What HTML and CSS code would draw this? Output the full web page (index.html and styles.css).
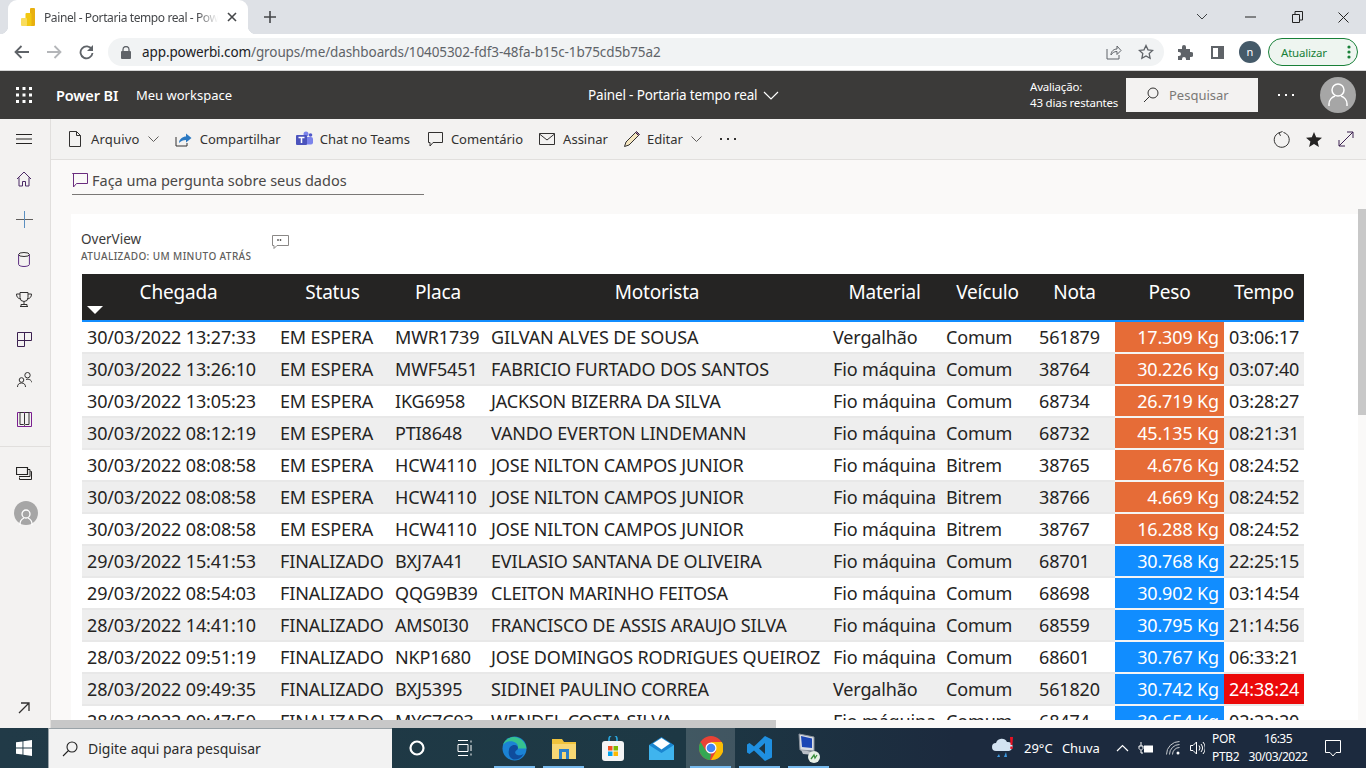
FILE: index.html
```html
<!doctype html>
<html lang="pt-br">
  <head>
    <meta charset="utf-8">
    <title>Painel - Portaria tempo real - Power BI</title>
    <link rel="stylesheet" href="styles.css">
  </head>
  <body>
    <!-- browser chrome -->
    <div class="tabstrip">
      <div class="tab">
        <svg class="favicon" width="14" height="18" viewBox="0 0 14 18"><rect x="9" y="0" width="5" height="18" rx="1" fill="#e8b00f"/><rect x="4.500" y="5" width="6" height="13" rx="1" fill="#f2c811"/><rect x="0" y="10" width="6" height="8" rx="1" fill="#f9dc5c"/></svg>
        <span class="tab-title">Painel - Portaria tempo real - Power BI</span>
        <svg width="10" height="10" viewBox="0 0 10 10"><path d="M1 1l8 8M9 1l-8 8" stroke="#45474a" stroke-width="1.600"/></svg>
      </div>
      <svg class="newtab" width="12" height="12" viewBox="0 0 12 12"><path d="M6 0v12M0 6h12" stroke="#45474a" stroke-width="1.600"/></svg>
      <div class="winctl">
        <svg width="12" height="8" viewBox="0 0 12 8"><path d="M1 1l5 5 5-5" fill="none" stroke="#3c4043"/></svg>
        <svg width="11" height="2" viewBox="0 0 11 2"><path d="M0 1h11" stroke="#222"/></svg>
        <svg width="11" height="12" viewBox="0 0 11 12"><path d="M.5 3.500h7v8h-7zM3 3V.5h7.500V9H8" fill="none" stroke="#222"/></svg>
        <svg width="11" height="11" viewBox="0 0 11 11"><path d="M.5.500l10 10M10.500.5l-10 10" stroke="#222"/></svg>
      </div>
    </div>
    <div class="urlbar">
      <svg class="nav-back" width="16" height="14" viewBox="0 0 16 14"><path d="M15 7H2M7.500 1L1.500 7l6 6" fill="none" stroke="#5f6368" stroke-width="1.800"/></svg>
      <svg class="nav-fwd" width="16" height="14" viewBox="0 0 16 14"><path d="M1 7h13M8.500 1l6 6-6 6" fill="none" stroke="#b4b6b9" stroke-width="1.800"/></svg>
      <svg class="nav-reload" width="15" height="15" viewBox="0 0 15 15"><path d="M12.800 4.500A6 6 0 1 0 13.500 8" fill="none" stroke="#5f6368" stroke-width="1.800"/><path d="M14 0v6H8z" fill="#5f6368"/></svg>
      <div class="address">
        <svg width="10" height="13" viewBox="0 0 10 13"><path d="M2 5V3.500a3 3 0 0 1 6 0V5" fill="none" stroke="#5f6368" stroke-width="1.300"/><rect y="5" width="10" height="8" rx="1" fill="#5f6368"/></svg>
        <span class="url"><b>app.powerbi.com</b>/groups/me/dashboards/10405302-fdf3-48fa-b15c-1b75cd5b75a2</span>
        <svg class="addr-share" width="16" height="16" viewBox="0 0 16 16"><path d="M1 5v10h12v-4" fill="none" stroke="#5f6368"/><path d="M5 11c0-4 3-6 6-6V2l4 4.500-4 4V7.500C8 7.500 6 9 5 11z" fill="none" stroke="#5f6368"/></svg>
        <svg width="16" height="16" viewBox="0 0 16 16"><path d="M8 1.500l2 4.300 4.700.6-3.500 3.200.9 4.700L8 12l-4.100 2.300.9-4.700L1.300 6.400 6 5.800z" fill="none" stroke="#5f6368" stroke-width="1.300"/></svg>
      </div>
      <svg class="ext" width="15" height="15" viewBox="0 0 15 15"><path d="M0 4h4V2a2 2 0 0 1 4 0v2h4v3h1a2 2 0 0 1 0 5h-1v3H8v-1a2 2 0 0 0-4 0v1H0v-4h1a2 2 0 0 0 0-4H0z" fill="#5f6368"/></svg>
      <svg class="sidepanel" width="13" height="13" viewBox="0 0 13 13"><path d="M0 0h13v13H0z" fill="#5f6368"/><path d="M2 2h5v9H2z" fill="#fff"/></svg>
      <span class="profile">n</span>
      <span class="update">Atualizar<svg width="4" height="14" viewBox="0 0 4 14"><circle cx="2" cy="2" r="1.600" fill="#188038"/><circle cx="2" cy="7" r="1.600" fill="#188038"/><circle cx="2" cy="12" r="1.600" fill="#188038"/></svg></span>
    </div>

    <!-- power bi header -->
    <header class="pbi-head">
      <svg class="waffle" width="16" height="16" viewBox="0 0 16 16" fill="#fff"><rect width="3" height="3"/><rect x="6.500" width="3" height="3"/><rect x="13" width="3" height="3"/><rect y="6.500" width="3" height="3"/><rect x="6.500" y="6.500" width="3" height="3"/><rect x="13" y="6.500" width="3" height="3"/><rect y="13" width="3" height="3"/><rect x="6.500" y="13" width="3" height="3"/><rect x="13" y="13" width="3" height="3"/></svg>
      <span class="brand">Power BI</span>
      <span class="workspace">Meu workspace</span>
      <span class="board-title">Painel - Portaria tempo real</span>
      <svg class="board-chev" width="16" height="9" viewBox="0 0 16 9"><path d="M1 1l7 7 7-7" fill="none" stroke="#fff" stroke-width="1.200"/></svg>
      <div class="trial">Avaliação:<br>43 dias restantes</div>
      <div class="search">
        <svg width="16" height="16" viewBox="0 0 16 16"><circle cx="10" cy="6" r="5" fill="none" stroke="#323130"/><path d="M6.500 9.500L1 15" stroke="#323130"/></svg>
        <span>Pesquisar</span>
      </div>
      <svg class="head-more" width="16" height="2" viewBox="0 0 16 2" fill="#fff"><rect width="2" height="2"/><rect x="7" width="2" height="2"/><rect x="14" width="2" height="2"/></svg>
      <span class="head-avatar">
        <svg width="20" height="24" viewBox="0 0 20 24"><circle cx="10" cy="7" r="6" fill="none" stroke="#fff" stroke-width="1.500"/><path d="M1 23v-2c0-4 3-7 6-8M19 23v-2c0-4-3-7-6-8" fill="none" stroke="#fff" stroke-width="1.500"/></svg>
      </span>
    </header>

    <div class="app">
      <nav class="sidebar">
        <span class="rail"><svg width="16" height="10" viewBox="0 0 16 10"><path d="M0 .5h16M0 5h16M0 9.500h16" stroke="#252423"/></svg></span>
        <span class="rail"><svg width="16" height="16" viewBox="0 0 16 16"><path d="M1 8l7-7 7 7M3 6.500V15h3.500v-4.500h3V15H13V6.500" fill="none" stroke="#4b2a66"/></svg></span>
        <span class="rail"><svg width="17" height="17" viewBox="0 0 17 17"><path d="M0 8.500h17" stroke="#605e5c"/><path d="M8.500 0v17" stroke="#5a8fc0"/></svg></span>
        <span class="rail"><svg width="12" height="15" viewBox="0 0 12 15"><ellipse cx="6" cy="2.500" rx="5.400" ry="2" fill="none" stroke="#323130"/><path d="M.6 2.500v10c0 1 2.400 2 5.400 2s5.400-1 5.400-2v-10" fill="none" stroke="#5c2d80"/></svg></span>
        <span class="rail"><svg width="16" height="15" viewBox="0 0 16 15"><path d="M4 .5h8v5a4 4 0 0 1-8 0zM4 2H.5c0 3 1.500 4.500 4 5M12 2h3.500c0 3-1.500 4.500-4 5M8 9.500V12M5 14.500v-2h6v2zM4 14.500h8" fill="none" stroke="#323130"/></svg></span>
        <span class="rail"><svg width="15" height="15" viewBox="0 0 15 15"><path d="M.5.500h14v8H.5zM7.500.5v14M.5 8.500v6h7" fill="none" stroke="#3b2050"/></svg></span>
        <span class="rail"><svg width="15" height="15" viewBox="0 0 15 15"><circle cx="10.500" cy="3.200" r="2.700" fill="none" stroke="#323130"/><circle cx="4.500" cy="8" r="2.300" fill="none" stroke="#323130"/><path d="M.5 15c0-2.500 1.500-4 4-4s4 1.500 4 4M9 7.500c2.500-1 5.500.5 6 3" fill="none" stroke="#323130"/></svg></span>
        <span class="rail"><svg width="15" height="15" viewBox="0 0 15 15"><path d="M.5.500h14v14H.5z" fill="none" stroke="#7a1e8f"/><path d="M3 .5h3.500l1 1 1-1H12v12H8.500l-1 1-1-1H3zM7.500 1.500v11" fill="none" stroke="#323130"/></svg></span>
        <hr class="side-rule">
        <span class="rail"><svg width="16" height="13" viewBox="0 0 16 13"><path d="M.5.500h11v7H.5z" fill="none" stroke="#252423" stroke-width="1.200"/><path d="M12 2.500h2v7H3M14.500 4.500h1v8h-12v-2" fill="none" stroke="#252423"/></svg></span>
        <span class="rail"><span class="side-avatar"><svg width="14" height="16" viewBox="0 0 14 16"><circle cx="7" cy="5" r="4" fill="none" stroke="#fff" stroke-width="1.300"/><path d="M1 16v-1c0-3 2-5 4-6M13 16v-1c0-3-2-5-4-6" fill="none" stroke="#fff" stroke-width="1.300"/></svg></span></span>
        <svg class="side-expand" width="12" height="12" viewBox="0 0 12 12"><path d="M1 11L11 1M3 1h8v8" fill="none" stroke="#323130" stroke-width="1.300"/></svg>
      </nav>

      <div class="workarea">
        <div class="cmdbar">
          <svg class="cmd-icon cmd-first" width="12" height="16" viewBox="0 0 12 16"><path d="M.5.500h7l4 4v11H.5zM7.500.5v4h4" fill="none" stroke="#323130"/></svg>
          <span class="cmd">Arquivo</span>
          <svg class="chev" width="11" height="6" viewBox="0 0 11 6"><path d="M.5.500l5 5 5-5" fill="none" stroke="#605e5c"/></svg>
          <svg class="cmd-icon" width="17" height="15" viewBox="0 0 17 15"><path d="M1 5v9h11v-3" fill="none" stroke="#323130"/><path d="M4 11c0-4 4-6.500 7-6.500V1.500l5.500 4.500L11 10.500V8C8 8 6 9 4 11z" fill="#2b79c2"/></svg>
          <span class="cmd">Compartilhar</span>
          <svg class="cmd-icon cmd-teams" width="17" height="17" viewBox="0 0 17 17"><circle cx="10" cy="3" r="2.500" fill="#7b83eb"/><circle cx="14.500" cy="4" r="1.800" fill="#5059c9"/><rect x="9" y="6" width="8" height="7.500" rx="2" fill="#7b83eb"/><rect x="0" y="4" width="11" height="10" rx="1" fill="#4b53bc"/><path d="M2.500 6.500h6M5.500 6.500v5.500" stroke="#fff" stroke-width="1.500"/></svg>
          <span class="cmd">Chat no Teams</span>
          <svg class="cmd-icon cmd-comment" width="15" height="15" viewBox="0 0 15 15"><path d="M.5.500h14v10H5l-3 3.500v-3.500H.5z" fill="none" stroke="#323130"/></svg>
          <span class="cmd">Comentário</span>
          <svg class="cmd-icon cmd-mail" width="16" height="12" viewBox="0 0 16 12"><path d="M.5.500h15v11H.5zM.5 1l7.500 6 7.500-6" fill="none" stroke="#323130"/></svg>
          <span class="cmd">Assinar</span>
          <svg class="cmd-icon cmd-pencil" width="17" height="17" viewBox="0 0 17 17"><path d="M3 11L12.500 1.500l3 3L6 14l-4.500 1.500z" fill="#f5e6c0" stroke="#323130"/><path d="M12.500 1.500l3 3 1-1-3-3z" fill="#b56fb5" stroke="#323130"/></svg>
          <span class="cmd">Editar</span>
          <svg class="chev" width="11" height="6" viewBox="0 0 11 6"><path d="M.5.500l5 5 5-5" fill="none" stroke="#605e5c"/></svg>
          <svg class="cmd-more" width="16" height="2" viewBox="0 0 16 2" fill="#323130"><rect width="2" height="2"/><rect x="7" width="2" height="2"/><rect x="14" width="2" height="2"/></svg>
          <div class="cmd-right">
            <svg width="17" height="17" viewBox="0 0 17 17"><path d="M6 1.800A7.500 7.500 0 1 0 10.500 1.500" fill="none" stroke="#323130"/><path d="M9.500 .5L6 1.800l1.500 3" fill="none" stroke="#323130"/></svg>
            <svg width="16" height="15" viewBox="0 0 16 15"><path d="M8 0l2.200 5.200 5.800.5-4.400 3.700 1.300 5.600L8 12l-4.900 3 1.300-5.600L0 5.700l5.800-.5z" fill="#252423"/></svg>
            <svg width="16" height="16" viewBox="0 0 16 16"><path d="M1 15L15 1M9 1h6v6M1 9v6h6" fill="none" stroke="#3b2050"/></svg>
          </div>
        </div>

        <div class="canvas-row">
          <div class="canvas">
            <div class="qna">
              <svg width="16" height="16" viewBox="0 0 16 16"><path d="M.5 1.500h15v10H4.500l-3 3.500V1.500z" fill="none" stroke="#6a2c7e"/></svg>
              <span>Faça uma pergunta sobre seus dados</span>
            </div>
            <section class="tile">
              <div class="tile-head">
                <div>
                  <div class="tile-name">OverView</div>
                  <div class="tile-updated">ATUALIZADO: UM MINUTO ATRÁS</div>
                </div>
                <svg width="17" height="15" viewBox="0 0 17 15"><path d="M.5.500h16v10H5l-3 3v-3H.5z" fill="none" stroke="#8a8886"/><path d="M6 4v2M8.500 4v2" stroke="#605e5c" stroke-width="1.400"/></svg>
              </div>
              <table class="grid">
                <colgroup>
                  <col class="c1"><col class="c2"><col class="c3"><col class="c4"><col class="c5"><col class="c6"><col class="c7"><col class="c8"><col class="c9">
                </colgroup>
                <thead>
                  <tr>
                    <th>Chegada<i class="sort"></i></th><th>Status</th><th>Placa</th><th>Motorista</th><th>Material</th><th>Veículo</th><th>Nota</th><th>Peso</th><th>Tempo</th>
                  </tr>
                </thead>
                <tbody>
                  <tr><td>30/03/2022 13:27:33</td><td>EM ESPERA</td><td>MWR1739</td><td>GILVAN ALVES DE SOUSA</td><td>Vergalhão</td><td>Comum</td><td>561879</td><td class="peso orange">17.309 Kg</td><td class="tempo">03:06:17</td></tr>
                  <tr><td>30/03/2022 13:26:10</td><td>EM ESPERA</td><td>MWF5451</td><td>FABRICIO FURTADO DOS SANTOS</td><td>Fio máquina</td><td>Comum</td><td>38764</td><td class="peso orange">30.226 Kg</td><td class="tempo">03:07:40</td></tr>
                  <tr><td>30/03/2022 13:05:23</td><td>EM ESPERA</td><td>IKG6958</td><td>JACKSON BIZERRA DA SILVA</td><td>Fio máquina</td><td>Comum</td><td>68734</td><td class="peso orange">26.719 Kg</td><td class="tempo">03:28:27</td></tr>
                  <tr><td>30/03/2022 08:12:19</td><td>EM ESPERA</td><td>PTI8648</td><td>VANDO EVERTON LINDEMANN</td><td>Fio máquina</td><td>Comum</td><td>68732</td><td class="peso orange">45.135 Kg</td><td class="tempo">08:21:31</td></tr>
                  <tr><td>30/03/2022 08:08:58</td><td>EM ESPERA</td><td>HCW4110</td><td>JOSE NILTON CAMPOS JUNIOR</td><td>Fio máquina</td><td>Bitrem</td><td>38765</td><td class="peso orange">4.676 Kg</td><td class="tempo">08:24:52</td></tr>
                  <tr><td>30/03/2022 08:08:58</td><td>EM ESPERA</td><td>HCW4110</td><td>JOSE NILTON CAMPOS JUNIOR</td><td>Fio máquina</td><td>Bitrem</td><td>38766</td><td class="peso orange">4.669 Kg</td><td class="tempo">08:24:52</td></tr>
                  <tr><td>30/03/2022 08:08:58</td><td>EM ESPERA</td><td>HCW4110</td><td>JOSE NILTON CAMPOS JUNIOR</td><td>Fio máquina</td><td>Bitrem</td><td>38767</td><td class="peso orange">16.288 Kg</td><td class="tempo">08:24:52</td></tr>
                  <tr><td>29/03/2022 15:41:53</td><td>FINALIZADO</td><td>BXJ7A41</td><td>EVILASIO SANTANA DE OLIVEIRA</td><td>Fio máquina</td><td>Comum</td><td>68701</td><td class="peso blue">30.768 Kg</td><td class="tempo">22:25:15</td></tr>
                  <tr><td>29/03/2022 08:54:03</td><td>FINALIZADO</td><td>QQG9B39</td><td>CLEITON MARINHO FEITOSA</td><td>Fio máquina</td><td>Comum</td><td>68698</td><td class="peso blue">30.902 Kg</td><td class="tempo">03:14:54</td></tr>
                  <tr><td>28/03/2022 14:41:10</td><td>FINALIZADO</td><td>AMS0I30</td><td>FRANCISCO DE ASSIS ARAUJO SILVA</td><td>Fio máquina</td><td>Comum</td><td>68559</td><td class="peso blue">30.795 Kg</td><td class="tempo">21:14:56</td></tr>
                  <tr><td>28/03/2022 09:51:19</td><td>FINALIZADO</td><td>NKP1680</td><td>JOSE DOMINGOS RODRIGUES QUEIROZ</td><td>Fio máquina</td><td>Comum</td><td>68601</td><td class="peso blue">30.767 Kg</td><td class="tempo">06:33:21</td></tr>
                  <tr><td>28/03/2022 09:49:35</td><td>FINALIZADO</td><td>BXJ5395</td><td>SIDINEI PAULINO CORREA</td><td>Vergalhão</td><td>Comum</td><td>561820</td><td class="peso blue">30.742 Kg</td><td class="tempo red">24:38:24</td></tr>
                  <tr><td>28/03/2022 09:47:59</td><td>FINALIZADO</td><td>MYC7C93</td><td>WENDEL COSTA SILVA</td><td>Fio máquina</td><td>Comum</td><td>68474</td><td class="peso blue">30.654 Kg</td><td class="tempo">02:22:20</td></tr>
                </tbody>
              </table>
            </section>
          </div>
          <div class="vscroll"><div class="vthumb"></div></div>
        </div>
        <div class="hscroll"><div class="hthumb"></div></div>
      </div>
    </div>

    <!-- windows taskbar -->
    <footer class="taskbar">
      <div class="start">
        <svg width="16" height="16" viewBox="0 0 16 16" fill="#fff"><path d="M0 2.300l6.500-.9v6.200H0zM7.400 1.300L16 0v7.600H7.400zM0 8.400h6.500v6.200L0 13.700zM7.400 8.400H16V16l-8.600-1.200z"/></svg>
      </div>
      <div class="winsearch">
        <svg width="16" height="16" viewBox="0 0 16 16"><circle cx="10" cy="6" r="5" fill="none" stroke="#222" stroke-width="1.100"/><path d="M6.500 9.500L1 15" stroke="#222" stroke-width="1.100"/></svg>
        <span>Digite aqui para pesquisar</span>
      </div>
      <div class="slot"><svg width="16" height="16" viewBox="0 0 16 16"><circle cx="8" cy="8" r="6.500" fill="none" stroke="#fff" stroke-width="2.200"/></svg></div>
      <div class="slot"><svg width="17" height="16" viewBox="0 0 17 16"><path d="M1 .5h10M1 15.500h10M1 4.500h10v7H1zM14 .5v2M14 5v6M14 13.500v2" fill="none" stroke="#fff"/></svg></div>
      <div class="slot on">
        <svg width="25" height="25" viewBox="0 0 25 25"><circle cx="12.500" cy="12.500" r="12" fill="#1b83d4"/><path d="M24.500 13C24 6 18 1 12 1 6 1 2 5 1 9c3-4 9-5 13-2 2 1.500 2.500 4 1.500 5.500h9z" fill="#36c28f"/><path d="M7 14c0-3 3-5.500 6-5 3 .5 3.500 3 2.500 4.500-1 1-3 1.500-2 4 1 2 5 2.500 8 .5-2 4-6 6-10 5.500C7 22 6 17 7 14z" fill="#0f4c9c"/></svg>
      </div>
      <div class="slot on">
        <svg width="24" height="22" viewBox="0 0 24 22"><path d="M0 2h10l2 3h12v17H0z" fill="#f0c33c"/><path d="M0 7h24v15H0z" fill="#f7d774"/><path d="M7 12h10v10H7z" fill="#2a7fc9"/><path d="M10 15h4v7h-4z" fill="#f7d774"/></svg>
      </div>
      <div class="slot">
        <svg width="22" height="25" viewBox="0 0 22 25"><path d="M7 6V3a4 4 0 0 1 8 0v3" fill="none" stroke="#2aa7df" stroke-width="1.600"/><rect y="5" width="22" height="20" rx="3" fill="#f4f4f4"/><rect x="6" y="10" width="4.500" height="4.500" fill="#f25022"/><rect x="11.500" y="10" width="4.500" height="4.500" fill="#7fba00"/><rect x="6" y="15.500" width="4.500" height="4.500" fill="#00a4ef"/><rect x="11.500" y="15.500" width="4.500" height="4.500" fill="#ffb900"/></svg>
      </div>
      <div class="slot">
        <svg width="25" height="23" viewBox="0 0 25 23"><path d="M12.500 0L25 8v15H0V8z" fill="#1a86d0"/><path d="M0 8l12.500 8L25 8v15H0z" fill="#3fb4ee"/><path d="M4 6.500L12.500 1 21 6.500l-8.500 6z" fill="#fff"/></svg>
      </div>
      <div class="slot on active">
        <svg width="24" height="24" viewBox="0 0 24 24"><circle cx="12" cy="12" r="12" fill="#e94235"/><path d="M12 24a12 12 0 0 1-10.400-18L7 15l5 3-1 6z" fill="#34a853"/><path d="M12 6h10.900A12 12 0 0 1 12 24l5.200-9z" fill="#fbbc04"/><circle cx="12" cy="12" r="5.500" fill="#fff"/><circle cx="12" cy="12" r="4.300" fill="#4285f4"/></svg>
      </div>
      <div class="slot on">
        <svg width="25" height="25" viewBox="0 0 25 25"><path d="M18 0l7 3.500v18L18 25 7 14.500 2.500 18 0 16.500v-8L2.500 7 7 10.500zM18 7l-6 5.500 6 5.500z" fill="#1f8fe0"/></svg>
      </div>
      <div class="slot on">
        <svg width="24" height="30" viewBox="0 0 24 30"><path d="M2 1l15 3v14L3 17z" fill="#d9dde3" stroke="#8a929c"/><path d="M4 3l11 2.500V15L5 14z" fill="#1b46b5"/><path d="M4 17l13 2v3L6 21z" fill="#b9bec6"/><circle cx="17" cy="24" r="6" fill="#e8efe6"/><path d="M14 26l3-4 1 3 2-3" fill="none" stroke="#3c8f3c" stroke-width="1.300"/></svg>
      </div>
      <div class="tray">
        <svg class="weather" width="23" height="24" viewBox="0 0 23 24"><path d="M4 15a4 4 0 0 1 0-8 6 6 0 0 1 11-1 4.500 4.500 0 0 1 2 9z" fill="#d3e3f2"/><path d="M7 18l-2 3h3zM14 16l-2 5h3z" fill="#3e9be3"/><path d="M18 1h3l-.6 8h-1.800z" fill="#e81123"/><rect x="18.300" y="10.500" width="2.400" height="2.400" fill="#e81123"/></svg>
        <span class="temp">29°C</span>
        <span class="rain">Chuva</span>
        <svg class="caret" width="13" height="8" viewBox="0 0 13 8"><path d="M1 7l5.500-5.500L12 7" fill="none" stroke="#fff" stroke-width="1.200"/></svg>
        <svg class="batt" width="16" height="13" viewBox="0 0 16 13"><path d="M3 0v4M1 4h4v2.500L3 8.500 1 6.500zM3 8.500V11h2" fill="none" stroke="#fff"/><rect x="6" y="3.500" width="9" height="7" fill="#fff"/></svg>
        <svg class="wifi" width="14" height="14" viewBox="0 0 14 14"><path d="M.5 13.500a13 13 0 0 1 13-13M3.500 13.500a10 10 0 0 1 10-10M6.500 13.500a7 7 0 0 1 7-7" fill="none" stroke="#c8ccd0"/><circle cx="12" cy="12" r="1.500" fill="#fff"/></svg>
        <svg class="vol" width="15" height="14" viewBox="0 0 15 14"><path d="M.5 4.500h2.500l3.500-3.500v12L3 9.500H.5zM9 4.500a4 4 0 0 1 0 5M11 3a6.500 6.500 0 0 1 0 8M13 1a9 9 0 0 1 0 12" fill="none" stroke="#fff"/></svg>
        <div class="lang">POR<br>PTB2</div>
        <div class="clock">16:35<br>30/03/2022</div>
        <svg class="notify" width="16" height="17" viewBox="0 0 16 17"><path d="M.5.500h15v12h-4.500L8 16l-3-3.500H.5z" fill="none" stroke="#fff"/></svg>
      </div>
    </footer>
  </body>
</html>
```

FILE: styles.css
```css
* {
    box-sizing: border-box;
}

html, body {
    margin: 0;
    height: 768px;
    overflow: hidden;
}

body {
    display: flex;
    flex-direction: column;
    font-family: "Noto Sans", "Open Sans", sans-serif;
    color: #252423;
    background: #faf9f8;
}

svg {
    display: block;
    flex: none;
}

/* browser */
.tabstrip {
    height: 34px;
    flex: none;
    display: flex;
    align-items: center;
    background: #dee1e6;
    padding-left: 8px;
}

.tab {
    position: relative;
    width: 240px;
    height: 34px;
    display: flex;
    align-items: center;
    padding: 0 11px 0 13px;
    background: #fff;
    border-radius: 9px 9px 0 0;
    color: #45474a;
}

.tab::before,
.tab::after {
    content: "";
    position: absolute;
    bottom: 0;
    width: 8px;
    height: 8px;
}

.tab::before {
    left: -8px;
    background: radial-gradient(circle at 0 0, transparent 8px, #fff 8.5px);
}

.tab::after {
    right: -8px;
    background: radial-gradient(circle at 100% 0, transparent 8px, #fff 8.5px);
}

.tab-title {
    width: 174px;
    margin: 0 9px;
    overflow: hidden;
    white-space: nowrap;
    font-size: 12px;
    letter-spacing: -0.4px;
    -webkit-mask-image: linear-gradient(to right, #000 88%, transparent);
    mask-image: linear-gradient(to right, #000 88%, transparent);
}

.newtab {
    margin-left: 16px;
}

.winctl {
    margin-left: auto;
    display: flex;
    align-items: center;
    padding-right: 17px;
}

.winctl svg:nth-child(1) { margin-right: 37px; }
.winctl svg:nth-child(2) { margin-right: 36px; }
.winctl svg:nth-child(3) { margin-right: 35px; }

.urlbar {
    height: 37px;
    flex: none;
    display: flex;
    align-items: center;
    background: #fff;
    padding-left: 14px;
    border-bottom: 1px solid #d5d5d5;
}

.nav-fwd { margin-left: 16px; }
.nav-reload { margin-left: 17px; }

.address {
    width: 1056px;
    height: 28px;
    margin-left: 14px;
    padding: 0 10px 0 13px;
    display: flex;
    align-items: center;
    background: #f1f3f4;
    border-radius: 14px;
}

.url {
    margin-left: 11px;
    font-size: 13.5px;
    letter-spacing: -0.1px;
    color: #5f6368;
    white-space: nowrap;
}

.url b {
    font-weight: 400;
    color: #202124;
}

.addr-share {
    margin-left: auto;
    margin-right: 16px;
}

.ext { margin-left: 14px; }
.sidepanel { margin-left: 18px; }

.profile {
    width: 22px;
    height: 22px;
    margin-left: 15px;
    border-radius: 50%;
    background: #455a69;
    color: #fff;
    font-size: 11px;
    text-align: center;
    line-height: 21px;
}

.update {
    width: 90px;
    height: 28px;
    margin-left: 7px;
    padding: 0 6px 0 12px;
    display: flex;
    align-items: center;
    justify-content: space-between;
    border: 1px solid #188038;
    border-radius: 14px;
    background: #eef5f0;
    color: #188038;
    font-size: 11.5px;
    letter-spacing: -0.2px;
}

/* power bi top bar */
.pbi-head {
    height: 48px;
    flex: none;
    display: flex;
    align-items: center;
    background: #3b3a39;
    color: #fff;
    padding-left: 16px;
}

.brand {
    margin-left: 24px;
    font-size: 14.5px;
    font-weight: 600;
    letter-spacing: -0.1px;
    width: 64px;
    white-space: nowrap;
}

.workspace {
    margin-left: 16px;
    width: 98px;
    font-size: 13px;
    white-space: nowrap;
}

.board-title {
    margin-left: 354px;
    width: 175px;
    font-size: 13.5px;
    white-space: nowrap;
    letter-spacing: -0.15px;
}

.trial {
    margin-left: 251px;
    width: 96px;
    font-size: 11.5px;
    line-height: 16px;
    letter-spacing: -0.2px;
    white-space: nowrap;
}

.search {
    width: 132px;
    height: 34px;
    display: flex;
    align-items: center;
    padding-left: 17px;
    background: #f3f2f1;
    color: #7a7876;
    font-size: 13px;
}

.search span { margin-left: 10px; }

.head-more {
    margin-left: 20px;
}

.head-avatar {
    width: 36px;
    height: 36px;
    margin-left: 26px;
    border-radius: 50%;
    background: #a6a6a6;
    display: flex;
    align-items: center;
    justify-content: center;
}

/* left rail */
.app {
    flex: 1;
    min-height: 0;
    display: flex;
}

.sidebar {
    width: 51px;
    flex: none;
    display: flex;
    flex-direction: column;
    align-items: center;
    padding-right: 2px;
    background: #f3f2f1;
    border-right: 1px solid #e1dfdd;
}

.rail {
    height: 40px;
    flex: none;
    display: flex;
    align-items: center;
    justify-content: center;
}

.side-rule {
    width: 50px;
    margin: 7px -2px 6px 0;
    border: 0;
    border-top: 1px solid #e1dfdd;
}

.side-avatar {
    width: 24px;
    height: 24px;
    margin-left: 3px;
    border-radius: 50%;
    background: #a6a6a6;
    display: flex;
    align-items: flex-end;
    justify-content: center;
}

.side-expand {
    margin-top: auto;
    margin-bottom: 14px;
}

/* command bar */
.workarea {
    flex: 1;
    min-width: 0;
    display: flex;
    flex-direction: column;
}

.cmdbar {
    height: 41px;
    flex: none;
    display: flex;
    align-items: center;
    background: #f3f2f1;
    border-bottom: 1px solid #e1dfdd;
    font-size: 13px;
    color: #323130;
}

.cmd {
    margin-left: 8px;
    white-space: nowrap;
}

.chev { margin-left: 8px; }
.cmd-icon { margin-left: 16px; }
.cmd-first { margin-left: 18px; }
.cmd-first + .cmd { margin-left: 10px; letter-spacing: 0.2px; }
.cmd-teams { margin-left: 15px; }
.cmd-teams + .cmd,
.cmd-pencil + .cmd { margin-left: 7px; }
.cmd-comment { margin-left: 18px; }
.cmd-pencil { margin-left: 15px; }
.cmd-more { margin-left: 18px; }

.cmd-right {
    margin-left: auto;
    margin-right: 12px;
    display: flex;
    align-items: center;
    gap: 16px;
}

/* dashboard canvas */
.canvas-row {
    flex: 1;
    min-height: 0;
    display: flex;
}

.canvas {
    flex: 1;
    min-width: 0;
    overflow: hidden;
    padding-left: 20px;
    background: #faf9f8;
}

.qna {
    width: 352px;
    height: 35px;
    margin: 0 0 19px 1px;
    padding-top: 6px;
    display: flex;
    align-items: center;
    gap: 4px;
    border-bottom: 1px solid #7a7876;
    font-size: 14.5px;
    color: #4a4847;
    white-space: nowrap;
}

.tile {
    background: #fff;
    padding: 15px 0 0 10px;
    height: 600px;
}

.tile-head {
    height: 45px;
    display: flex;
    gap: 21px;
}

.tile-head svg {
    margin-top: 6px;
}

.tile-name {
    font-size: 13.5px;
    line-height: 20px;
    color: #3b3a39;
}

.tile-updated {
    font-size: 10px;
    font-weight: 500;
    letter-spacing: 0.4px;
    line-height: 15px;
    color: #605e5c;
    white-space: nowrap;
}

.grid {
    width: 1222px;
    margin-left: 1px;
    table-layout: fixed;
    border-collapse: separate;
    border-spacing: 0;
    font-size: 18px;
}

.c1 { width: 193px; }
.c2 { width: 115px; }
.c3 { width: 96px; }
.c4 { width: 342px; }
.c5 { width: 113px; }
.c6 { width: 93px; }
.c7 { width: 81px; }
.c8 { width: 109px; }
.c9 { width: 80px; }

.grid th {
    position: relative;
    height: 48px;
    padding: 0 0 11px;
    background: #252423;
    border-bottom: 2px solid #118dff;
    color: #fff;
    font-weight: 400;
    font-size: 19px;
    letter-spacing: -0.2px;
    text-align: center;
}

.sort {
    position: absolute;
    left: 5px;
    top: 32px;
    border-left: 8px solid transparent;
    border-right: 8px solid transparent;
    border-top: 8px solid #fff;
}

.grid td {
    height: 32px;
    padding: 0 5px 1px;
    border-bottom: 2px solid #e8e8e8;
    white-space: nowrap;
    overflow: hidden;
    letter-spacing: -0.15px;
}

.grid tbody tr:nth-child(even) td {
    background: #eeeeee;
}

.grid tbody tr:nth-child(odd) td {
    background: #fff;
}

.grid td.peso,
.grid td.tempo {
    text-align: right;
}

.grid tbody tr td.orange {
    background: #e66c37;
    color: #fff;
    border-bottom-color: #f4f4f4;
}

.grid tbody tr td.blue {
    background: #118dff;
    color: #fff;
    border-bottom-color: #f4f4f4;
}

.grid tbody tr td.red {
    background: #eb0909;
    color: #fff;
}

.vscroll {
    width: 8px;
    flex: none;
    background: #faf9f8;
    padding-top: 49px;
}

.vthumb {
    height: 206px;
    background: #c8c8c8;
}

.hscroll {
    height: 8px;
    flex: none;
    background: #faf9f8;
}

.hthumb {
    width: 725px;
    height: 8px;
    background: #c8c8c8;
}

/* taskbar */
.taskbar {
    height: 40px;
    flex: none;
    display: flex;
    align-items: center;
    background: linear-gradient(to right, #213a47, #1d3844 50%, #1c2a3e 70%, #1c2a3e);
    color: #fff;
}

.start {
    width: 48px;
    display: flex;
    justify-content: center;
}

.winsearch {
    width: 344px;
    height: 40px;
    display: flex;
    align-items: center;
    padding-left: 13px;
    background: #f2f2f2;
    border: 1px solid #9aa3a8;
    border-width: 1px 0 0 1px;
    color: #2b2b2b;
    font-size: 14px;
}

.winsearch span { margin-left: 10px; }

.slot {
    position: relative;
    width: 49px;
    height: 40px;
    display: flex;
    align-items: center;
    justify-content: center;
}

.slot.on::after {
    content: "";
    position: absolute;
    left: 4px;
    right: 4px;
    bottom: 0;
    height: 2px;
    background: #76b9ed;
}

.slot.active {
    background: rgba(255, 255, 255, 0.16);
}

.tray {
    flex: 1;
    display: flex;
    align-items: center;
    font-size: 13px;
}

.weather { margin-left: 159px; }
.temp { margin-left: 9px; width: 38px; white-space: nowrap; }
.rain { letter-spacing: -0.1px; width: 40px; }
.caret { margin-left: 14px; }
.batt { margin-left: 9px; }
.wifi { margin-left: 12px; }
.vol { margin-left: 10px; }

.lang {
    margin-left: 7px;
    width: 31px;
    font-size: 12px;
    line-height: 18px;
    letter-spacing: -0.3px;
}

.clock {
    width: 70px;
    text-align: center;
    font-size: 12px;
    line-height: 18px;
    letter-spacing: -0.5px;
}

.notify { margin-left: 12px; }
```
